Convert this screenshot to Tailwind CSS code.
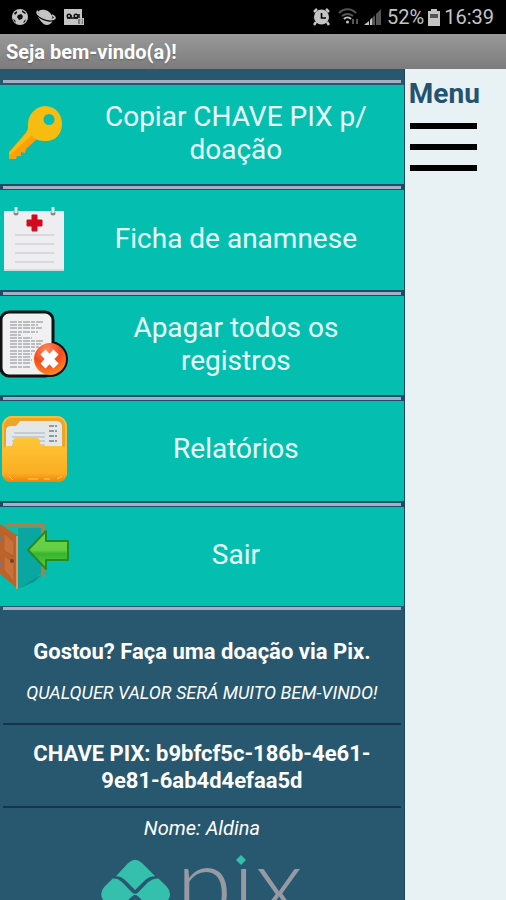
<!DOCTYPE html>
<html lang="pt-BR">
<head>
<meta charset="utf-8">
<meta name="viewport" content="width=device-width, initial-scale=1">
<title>Seja bem-vindo(a)!</title>
<script src="https://cdn.jsdelivr.net/npm/@tailwindcss/browser@4"></script>
</head>
<body class="flex h-screen flex-col overflow-hidden bg-[#e8f1f4] font-[Roboto,sans-serif]">
<div class="flex h-[34px] shrink-0 items-center justify-between bg-black pl-3 pr-3 text-[#c4c4c4]">
  <div class="flex items-center gap-2">
    <svg class="size-4" viewBox="0 0 16 16" aria-hidden="true"><circle cx="8" cy="8" r="8" fill="#c4c4c4"/><path d="M6 6l3-1 2 2-1 3-3 1-2-3zM2 4l3-2v2L3 6zM10 1l4 3-1 1-3-2zM1 10l2 1 1 3-2-2zM12 12l2-2-1 3-2 1z" fill="#111"/></svg>
    <svg class="h-4 w-5" viewBox="0 0 20 16" aria-hidden="true"><path d="M1 5C2-1 13-1 16 7c2 5-1 9-5 9S3 11 1 5z" fill="#c4c4c4"/><path d="M1 3c-1 5 14 12 17 6" fill="none" stroke="#000" stroke-width="2.500"/><path d="M2 2c-5 4 14 12 17 7 0-1-1-2-3-3" fill="none" stroke="#c4c4c4" stroke-width="1.800"/></svg>
    <svg class="h-4 w-5" viewBox="0 0 20 16" aria-hidden="true"><path d="M0 0h18v9h2v7H0z" fill="#c4c4c4"/><g fill="none" stroke="#111" stroke-width="1.5"><circle cx="5" cy="7" r="1.8"/><circle cx="12" cy="7" r="1.8"/><path d="M3 9h11M7 6v3M15 5v4"/></g><path d="M14 10h5v5h-5z" fill="#777"/><path d="M16 11h2l-2 3h2" fill="none" stroke="#ddd"/></svg>
  </div>
  <div class="flex items-center">
    <svg class="h-[18px] w-[17px]" viewBox="0 0 17 18" aria-hidden="true"><path d="M3 14l-2 3M14 14l2 3M1 4l3-3M16 4l-3-3" stroke="#c4c4c4" stroke-width="2.5"/><circle cx="8.500" cy="9" r="7.500" fill="#c4c4c4"/><path d="M8.500 5v5H13" fill="none" stroke="#000" stroke-width="1.600"/></svg>
    <svg class="ml-2 h-[18px] w-[22px]" viewBox="0 0 22 18" fill="none" aria-hidden="true"><path d="M1 5c5-5 12-5 17 0M4 8c4-3 7-3 11 0" stroke="#555" stroke-width="2"/><path d="M6 11c2-2 5-2 7 0" stroke="#c4c4c4" stroke-width="2"/><circle cx="9.500" cy="14" r="1.500" fill="#c4c4c4"/><path d="M15 11v5M19 11v5" stroke="#555" stroke-width="2"/></svg>
    <svg class="ml-1 h-[18px] w-[17px]" viewBox="0 0 17 18" aria-hidden="true"><path d="M6 12l5-5v10H6zM12 6l5-5v16h-5z" fill="#555"/><path d="M0 17l5-4v4zM6 12l2-2v7H6z" fill="#c4c4c4"/></svg>
    <span class="ml-[6px] text-[20px] leading-6">52%</span>
    <svg class="ml-1 h-[17px] w-3" viewBox="0 0 12 17" aria-hidden="true"><path d="M3 0h6v2h3v15H0V2h3z" fill="#c4c4c4"/><path d="M2 5h8v4H2z" fill="#555"/></svg>
    <span class="ml-1 text-[20px] leading-6">16:39</span>
  </div>
</div>
<header class="flex h-[35px] shrink-0 items-center bg-linear-to-b from-[#999] to-[#7c7c7c] px-[6px]">
  <h1 class="text-[20px] font-bold leading-6 text-white text-shadow-sm">Seja bem-vindo(a)!</h1>
</header>
<div class="flex min-h-0 flex-1">
  <main class="w-4/5 shrink-0 overflow-hidden border-r border-[#1c4763] bg-[#28586f] text-white">
    <div class="px-[3px] pt-[11px] pb-[2px]"><div class="h-[3px] bg-[#a3b0c3]"></div></div>
    <nav>
      <ul class="flex min-h-[521px] flex-col text-[28px] leading-[33px] text-[#e9fffb]">
        <li class="flex flex-1 flex-col">
          <button type="button" class="flex w-full flex-1 items-center bg-[#04bfb0] pb-1">
            <svg class="size-[68px] shrink-0" viewBox="0 0 68 68" aria-hidden="true"><path d="M29 30l8 10-11 10-1 4-4-1 0 4-4 0-1 3H9v-7z" fill="#ff9f0a"/><path d="M28 32l4 4-22 20-1-2z" fill="#f6bd10"/><path fill-rule="evenodd" d="M46 7c10 1 16 8 16 18 0 11-8 18-18 17-6 0-10-3-13-6l-5-3c4-3 0-9 4-16 3-6 9-10 16-10zm3 8a5 5 0 100 11 5 5 0 000-11z" fill="#f6bd10"/></svg>
            <span class="flex-1 px-6">Copiar CHAVE PIX p/ doação</span>
          </button>
          <div class="bg-[#1f4b68] px-[3px] pt-[2px] pb-px"><div class="h-[3px] bg-[#a3b0c3]"></div></div>
        </li>
        <li class="flex flex-1 flex-col">
          <button type="button" class="flex w-full flex-1 items-center bg-[#04bfb0] pb-1">
            <svg class="size-[68px] shrink-0" viewBox="0 0 68 68" aria-hidden="true"><path d="M4 7h60v60H4z" fill="#eeeef0"/><path d="M4 66h60" stroke="#d4dbdc" stroke-width="2"/><path d="M15 31h39M15 40h39M15 49h39M15 58h39" stroke="#d7d9dc" stroke-width="2"/><path d="M32 11h5v5h5v6h-5v5h-5v-5h-5v-6h5z" fill="#d20a1e" stroke="#d20a1e" stroke-linejoin="round"/><g fill="#888"><circle cx="16" cy="9" r="2.500"/><circle cx="53" cy="9" r="2.500"/></g><path d="M16 3v6M53 3v6" stroke="#dce8e8" stroke-width="3"/></svg>
            <span class="flex-1 px-6">Ficha de anamnese</span>
          </button>
          <div class="bg-[#1f4b68] px-[3px] pt-[2px] pb-px"><div class="h-[3px] bg-[#a3b0c3]"></div></div>
        </li>
        <li class="flex flex-1 flex-col">
          <button type="button" class="flex w-full flex-1 items-center bg-[#04bfb0] pb-1">
            <svg class="size-[68px] shrink-0" viewBox="0 0 68 68" aria-hidden="true"><defs><radialGradient id="red" cx=".4" cy=".2" r=".9"><stop offset="0" stop-color="#ff8a5c"/><stop offset=".5" stop-color="#f54a1c"/><stop offset="1" stop-color="#ff9c25"/></radialGradient></defs><circle cx="50" cy="49" r="18" fill="#111"/><rect x="1" y="2" width="52" height="64" rx="8" fill="#f1f1f2" stroke="#111" stroke-width="3"/><g stroke="#85878b" stroke-width="1.200"><path d="M10 12h33M10 15h28M10 18h32M10 22h28M10 25h11M10 28h22M10 31h33M10 34h31M10 37h29M10 41h25M10 44h22M10 47h20M10 50h22M10 53h20M10 57h21" stroke-dasharray="7 1 4 1"/></g><circle cx="50" cy="49" r="16" fill="url(#red)"/><path d="M43 42l13 14M56 42L43 56" stroke="#fff" stroke-width="7"/></svg>
            <span class="flex-1 px-6">Apagar todos os registros</span>
          </button>
          <div class="bg-[#1f4b68] px-[3px] pt-[2px] pb-px"><div class="h-[3px] bg-[#a3b0c3]"></div></div>
        </li>
        <li class="flex flex-1 flex-col">
          <button type="button" class="flex w-full flex-1 items-center bg-[#04bfb0] pb-1">
            <svg class="size-[68px] shrink-0" viewBox="0 0 68 68" aria-hidden="true"><defs><linearGradient id="folder" x2="0" y2="1"><stop offset="0" stop-color="#ffc536"/><stop offset=".8" stop-color="#fbae24"/><stop offset="1" stop-color="#ef8208"/></linearGradient></defs><rect x="2" y="1" width="65" height="66" rx="10" fill="#eda42b"/><rect x="3" y="2" width="63" height="64" rx="9" fill="none" stroke="#fbbd39" stroke-width="2"/><path d="M6 34V16q0-5 5-5h5l4-5h36q6 0 6 6v22z" fill="#e3e7e8"/><path d="M14 18h31M12 22h33M12 26h33M12 30h33" stroke="#c6cccf" stroke-width="2"/><path d="M49 11h8M49 16h8M49 21h8M49 26h8" stroke="#8f999e" stroke-width="2" stroke-dasharray="5 1"/><path d="M2 38q0-7 7-7h2q2 0 2-4 0-4 4-4h19q4 0 4 4 0 4 4 4h16q7 0 7 7v19q0 10-10 10H12Q2 67 2 57z" fill="url(#folder)"/><path d="M9 61l4 4M57 64l5-3M28 64h10M44 64h6" stroke="#ffd25a" stroke-width="1"/></svg>
            <span class="flex-1 px-6">Relatórios</span>
          </button>
          <div class="bg-[#1f4b68] px-[3px] pt-[2px] pb-px"><div class="h-[3px] bg-[#a3b0c3]"></div></div>
        </li>
        <li class="flex flex-1 flex-col">
          <button type="button" class="flex w-full flex-1 items-center bg-[#04bfb0] pb-1">
            <svg class="size-[68px] shrink-0 overflow-visible" viewBox="0 0 68 68" aria-hidden="true"><defs><linearGradient id="arrow" x2="0" y2="1"><stop offset="0" stop-color="#65d34e"/><stop offset=".5" stop-color="#66ce43"/><stop offset=".6" stop-color="#35b52d"/><stop offset="1" stop-color="#61cd43"/></linearGradient></defs><path d="M18 69l18-12 6-2-8 7z" fill="#107f78" opacity=".6"/><path d="M18 8h23v46L18 69z" fill="#09a6a2"/><path d="M5 5h38v50h-2" fill="none" stroke="#bb7a40" stroke-width="3"/><path d="M0 4l18 12v53L0 54z" fill="#bd622a"/><path d="M4 13l10 9v14L4 31zM4 36l10 6v20L4 50z" fill="#c8713a" stroke="#b3602b"/><path d="M17 16v53" stroke="#dc965f" stroke-width="2"/><path d="M0 15v6M0 41v6" stroke="#777" stroke-width="3"/><circle cx="12" cy="41" r="2" fill="#764020"/><path d="M28 30l18-19v10h22v19H46v9z" fill="url(#arrow)" stroke="#218d25" stroke-width="2" stroke-linejoin="round"/></svg>
            <span class="flex-1 px-6">Sair</span>
          </button>
        </li>
      </ul>
    </nav>
    <section class="px-[3px] pt-[1px] text-center">
      <div class="h-[3px] bg-[#a3b0c3]"></div>
      <h2 class="pt-[28px] text-[22px] font-bold leading-[27px]">Gostou? Faça uma doação via Pix.</h2>
      <p class="pt-[17px] pb-[20px] text-[18px] italic leading-[21px]">QUALQUER VALOR SERÁ MUITO BEM-VINDO!</p>
      <hr class="border-t-2 border-[#17354a]">
      <p class="px-5 pt-[15px] pb-[12px] text-[22px] font-bold leading-[27px]">CHAVE PIX: b9bfcf5c-186b-4e61-9e81-6ab4d4efaa5d</p>
      <hr class="border-t-2 border-[#17354a]">
      <p class="pt-2 text-[20px] italic leading-6">Nome: Aldina</p>
      <svg class="mx-auto mt-[14px] h-[80px] w-[208px] overflow-visible" viewBox="0 0 208 80" role="img" aria-label="Pix">
        <path transform="translate(0 0) scale(1.06)" d="M17 21L28 9q7-7 14 0l12 12q-6 0-10 4L35 34 26 25q-4-4-9-4zM14 23q6 0 9 4l9 9q3 3 6 0l9-9q4-4 10-4l8 8q6 7 0 14l-8 8q-6 0-10-4l-9-9q-3-3-6 0l-9 9q-4 4-9 4l-8-8q-6-7 0-14zM17 56q6 0 10-4l8-9 9 9q4 4 10 4L42 68q-7 7-14 0z" fill="#35c0ad"/>
        <text x="78" y="66" font-family="Lato" font-weight="300" font-size="102" fill="#9799a3">pıx</text>
        <path d="M143 1l5 5-5 5-5-5z" fill="#35c0ad"/>
      </svg>
    </section>
  </main>
  <aside class="min-w-0 flex-1 px-1 pt-2">
    <button type="button" class="flex flex-col items-start text-left">
      <span class="text-[28px] font-bold leading-[33px] text-[#235370]">Menu</span>
      <span class="flex w-[68px] flex-col gap-[15px] pl-px pt-[13px]">
        <span class="h-[6px] bg-black"></span>
        <span class="h-[6px] bg-black"></span>
        <span class="h-[6px] bg-black"></span>
      </span>
    </button>
  </aside>
</div>
</body>
</html>
